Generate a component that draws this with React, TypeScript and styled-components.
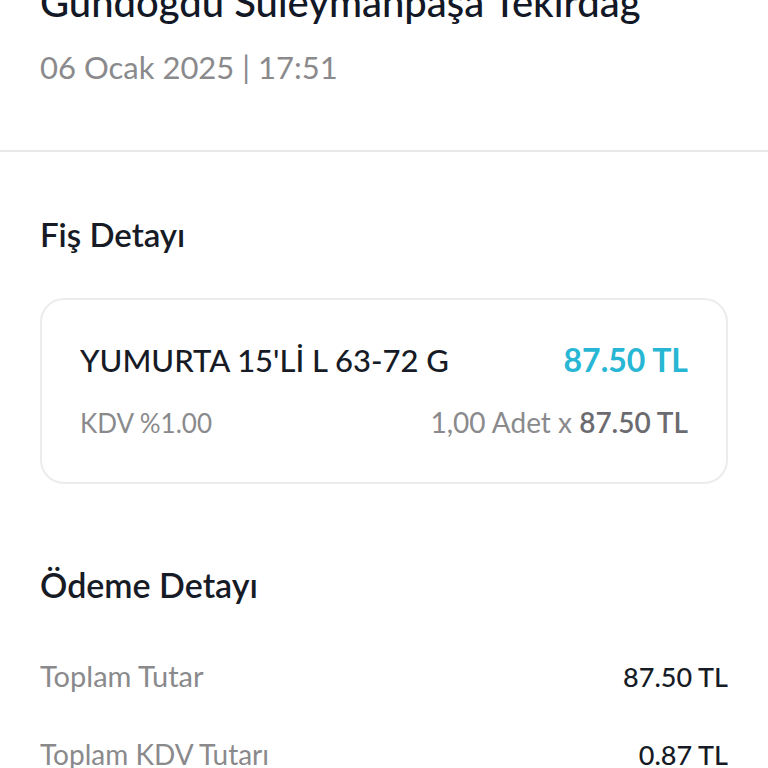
import React from "react";
import styled, { createGlobalStyle } from "styled-components";

const Global = createGlobalStyle`
  html, body { margin: 0; padding: 0; background: #ffffff; }
  body { font-family: "Lato", "Noto Sans", sans-serif; overflow: hidden; }
  * { box-sizing: border-box; }
`;

const Page = styled.div`
  width: 768px;
  height: 768px;
  overflow: hidden;
  background: #fff;
`;

const Scroll = styled.div`
  margin-top: -26px;
`;

const Header = styled.header`
  padding: 0 40px;
  height: 178px;
  border-bottom: 2px solid #e8e8e8;
`;

const Title = styled.h1`
  margin: 0;
  font-size: 40px;
  line-height: 57px;
  font-weight: 500;
  color: #121826;
  white-space: nowrap;
`;

const DateLine = styled.div`
  margin-top: 19px;
  font-size: 31px;
  line-height: 34px;
  color: #8a8a8c;
`;

const Section = styled.section`
  padding: 0 40px;
`;

const SectionTitle = styled.h2<{ $top: number; $size: number }>`
  margin: ${(p) => p.$top}px 0 0 0;
  font-size: ${(p) => p.$size}px;
  line-height: 34px;
  font-weight: 600;
  color: #161b26;
`;

const Card = styled.div`
  margin-top: 47px;
  border: 2px solid #ececec;
  border-radius: 24px;
  padding: 43px 38px;
  display: flex;
  flex-direction: column;
  gap: 29px;
`;

const Row = styled.div`
  display: flex;
  justify-content: space-between;
  align-items: baseline;
`;

const ItemName = styled.span`
  font-size: 31px;
  line-height: 34px;
  font-weight: 500;
  color: #161b26;
`;

const Price = styled.span`
  font-size: 32px;
  line-height: 34px;
  font-weight: 700;
  color: #27b6d4;
`;

const Muted = styled.span<{ $size: number }>`
  font-size: ${(p) => p.$size}px;
  line-height: 32px;
  color: #8a8a8c;
`;

const Strong = styled.b`
  font-weight: 600;
  color: #6b6b6f;
`;

const SummaryList = styled.div`
  margin-top: 57px;
  display: flex;
  flex-direction: column;
  gap: 43px;
`;

const SummaryLabel = styled.span<{ $size: number }>`
  font-size: ${(p) => p.$size}px;
  line-height: 34px;
  color: #8a8a8c;
`;

const SummaryValue = styled.span`
  font-size: 27px;
  line-height: 34px;
  font-weight: 500;
  color: #161b26;
`;

export default function App() {
  return (
    <Page>
      <Global />
      <Scroll>
        <Header>
          <Title>Gündoğdu Süleymanpaşa Tekirdağ</Title>
          <DateLine>06 Ocak 2025 | 17:51</DateLine>
        </Header>
        <Section>
          <SectionTitle $top={65} $size={33}>
            Fiş Detayı
          </SectionTitle>
          <Card>
            <Row>
              <ItemName>YUMURTA 15'Lİ L 63-72 G</ItemName>
              <Price>87.50 TL</Price>
            </Row>
            <Row>
              <Muted $size={26}>KDV %1.00</Muted>
              <Muted $size={28}>
                1,00 Adet x <Strong>87.50 TL</Strong>
              </Muted>
            </Row>
          </Card>
          <SectionTitle $top={84} $size={34}>
            Ödeme Detayı
          </SectionTitle>
          <SummaryList>
            <Row>
              <SummaryLabel $size={29}>Toplam Tutar</SummaryLabel>
              <SummaryValue>87.50 TL</SummaryValue>
            </Row>
            <Row>
              <SummaryLabel $size={28}>Toplam KDV Tutarı</SummaryLabel>
              <SummaryValue>0.87 TL</SummaryValue>
            </Row>
          </SummaryList>
        </Section>
      </Scroll>
    </Page>
  );
}
